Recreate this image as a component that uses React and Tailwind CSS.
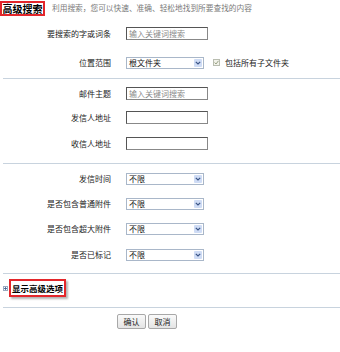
import React from "react";

const font = { fontFamily: '"Noto Sans CJK SC", "Noto Sans", sans-serif' };

function Label({ children }) {
  return (
    <div className="w-[111px] shrink-0 whitespace-nowrap text-right text-[8px] leading-[13px] text-[#222]">{children}</div>
  );
}

function TextInput({ placeholder }) {
  return (
    <div className="ml-[15px] flex h-[13px] w-[82px] items-center whitespace-nowrap border border-t-[#555] border-l-[#555] border-r-[#888] border-b-[#888] bg-white px-[2px] text-[8px] leading-[11px] text-[#8a8a8a]">
      {placeholder || ""}
    </div>
  );
}

function Select({ value }) {
  return (
    <div className="ml-[15px] flex h-[12px] w-[78px] items-stretch border border-[#a9b7c9] bg-white">
      <div className="flex flex-1 items-center px-[2px] text-[8px] leading-[10px] text-[#111]">{value}</div>
      <div className="m-[1px] flex w-[8px] items-center justify-center rounded-[1px] bg-[#cfdcf5]">
        <svg width="6" height="4" viewBox="0 0 6 4">
          <path d="M0.8 0.8 L3 3 L5.2 0.8" fill="none" stroke="#3b5587" strokeWidth="1.2" />
        </svg>
      </div>
    </div>
  );
}

function Divider({ className }) {
  return <div className={"ml-[3px] h-[1px] bg-[#c8d3de] " + className} />;
}

export default function App() {
  return (
    <div className="relative h-[352px] w-[340px] overflow-hidden bg-white" style={font}>
      {/* header */}
      <div className="flex h-[16px] items-center">
        <div className="flex h-[15px] w-[45px] items-center justify-center whitespace-nowrap border-2 border-[#e3262b] text-[10px] font-bold leading-[11px] text-black">
          高级搜索
        </div>
        <div className="ml-[7px] whitespace-nowrap text-[7.7px] leading-[10px] text-[#7a7a7a]">
          利用搜索，您可以快速、准确、轻松地找到所要查找的内容
        </div>
      </div>

      <div className="mt-[11px] flex h-[13px] items-center">
        <Label>要搜索的字或词条</Label>
        <TextInput placeholder="输入关键词搜索" />
      </div>
      <div className="mt-[16px] flex h-[13px] items-center">
        <Label>位置范围</Label>
        <Select value="根文件夹" />
        <div className="ml-[9px] flex h-[7px] w-[7px] items-center justify-center border border-[#b9bdb0] bg-[#f2f2ea]">
          <svg width="5" height="5" viewBox="0 0 5 5">
            <path d="M0.6 2.5 L2 4 L4.5 0.8" fill="none" stroke="#8f9a7a" strokeWidth="0.9" />
          </svg>
        </div>
        <div className="ml-[5px] whitespace-nowrap text-[8px] leading-[10px] text-[#222]">包括所有子文件夹</div>
      </div>

      <Divider className="mt-[9px]" />

      <div className="mt-[8px] flex h-[13px] items-center">
        <Label>邮件主题</Label>
        <TextInput placeholder="输入关键词搜索" />
      </div>
      <div className="mt-[11px] flex h-[13px] items-center">
        <Label>发信人地址</Label>
        <TextInput />
      </div>
      <div className="mt-[13px] flex h-[13px] items-center">
        <Label>收信人地址</Label>
        <TextInput />
      </div>

      <Divider className="mt-[13px]" />

      <div className="mt-[8px] flex h-[13px] items-center">
        <Label>发信时间</Label>
        <Select value="不限" />
      </div>
      <div className="mt-[12px] flex h-[13px] items-center">
        <Label>是否包含普通附件</Label>
        <Select value="不限" />
      </div>
      <div className="mt-[12px] flex h-[13px] items-center">
        <Label>是否包含超大附件</Label>
        <Select value="不限" />
      </div>
      <div className="mt-[13px] flex h-[13px] items-center">
        <Label>是否已标记</Label>
        <Select value="不限" />
      </div>

      <Divider className="mt-[12px]" />

      <div className="mt-[5px] flex h-[18px] items-center">
        <div className="ml-[3px] flex h-[5px] w-[5px] items-center justify-center border border-[#9aaac0] bg-white">
          <svg width="3" height="3" viewBox="0 0 3 3">
            <path d="M0 1.5 H3 M1.5 0 V3" stroke="#3a5a8a" strokeWidth="0.8" />
          </svg>
        </div>
        <div className="ml-[1px] flex h-[18px] w-[57px] items-center justify-center whitespace-nowrap border-2 border-[#e3262b] text-[8.5px] font-bold leading-[10px] text-black shadow-[2px_2px_2px_rgba(0,0,0,0.3)]">
          显示高级选项
        </div>
      </div>

      <Divider className="mt-[10px]" />

      <div className="mt-[6px] flex h-[15px] items-center">
        <div className="ml-[117px] flex h-[15px] w-[29px] items-center justify-center rounded-[2px] border border-[#a8a8a8] bg-gradient-to-b from-[#fafafa] to-[#e4e4e4] text-[8px] leading-[10px] text-[#222]">
          确认
        </div>
        <div className="ml-[2px] flex h-[15px] w-[29px] items-center justify-center rounded-[2px] border border-[#a8a8a8] bg-gradient-to-b from-[#fafafa] to-[#e4e4e4] text-[8px] leading-[10px] text-[#222]">
          取消
        </div>
      </div>
    </div>
  );
}
